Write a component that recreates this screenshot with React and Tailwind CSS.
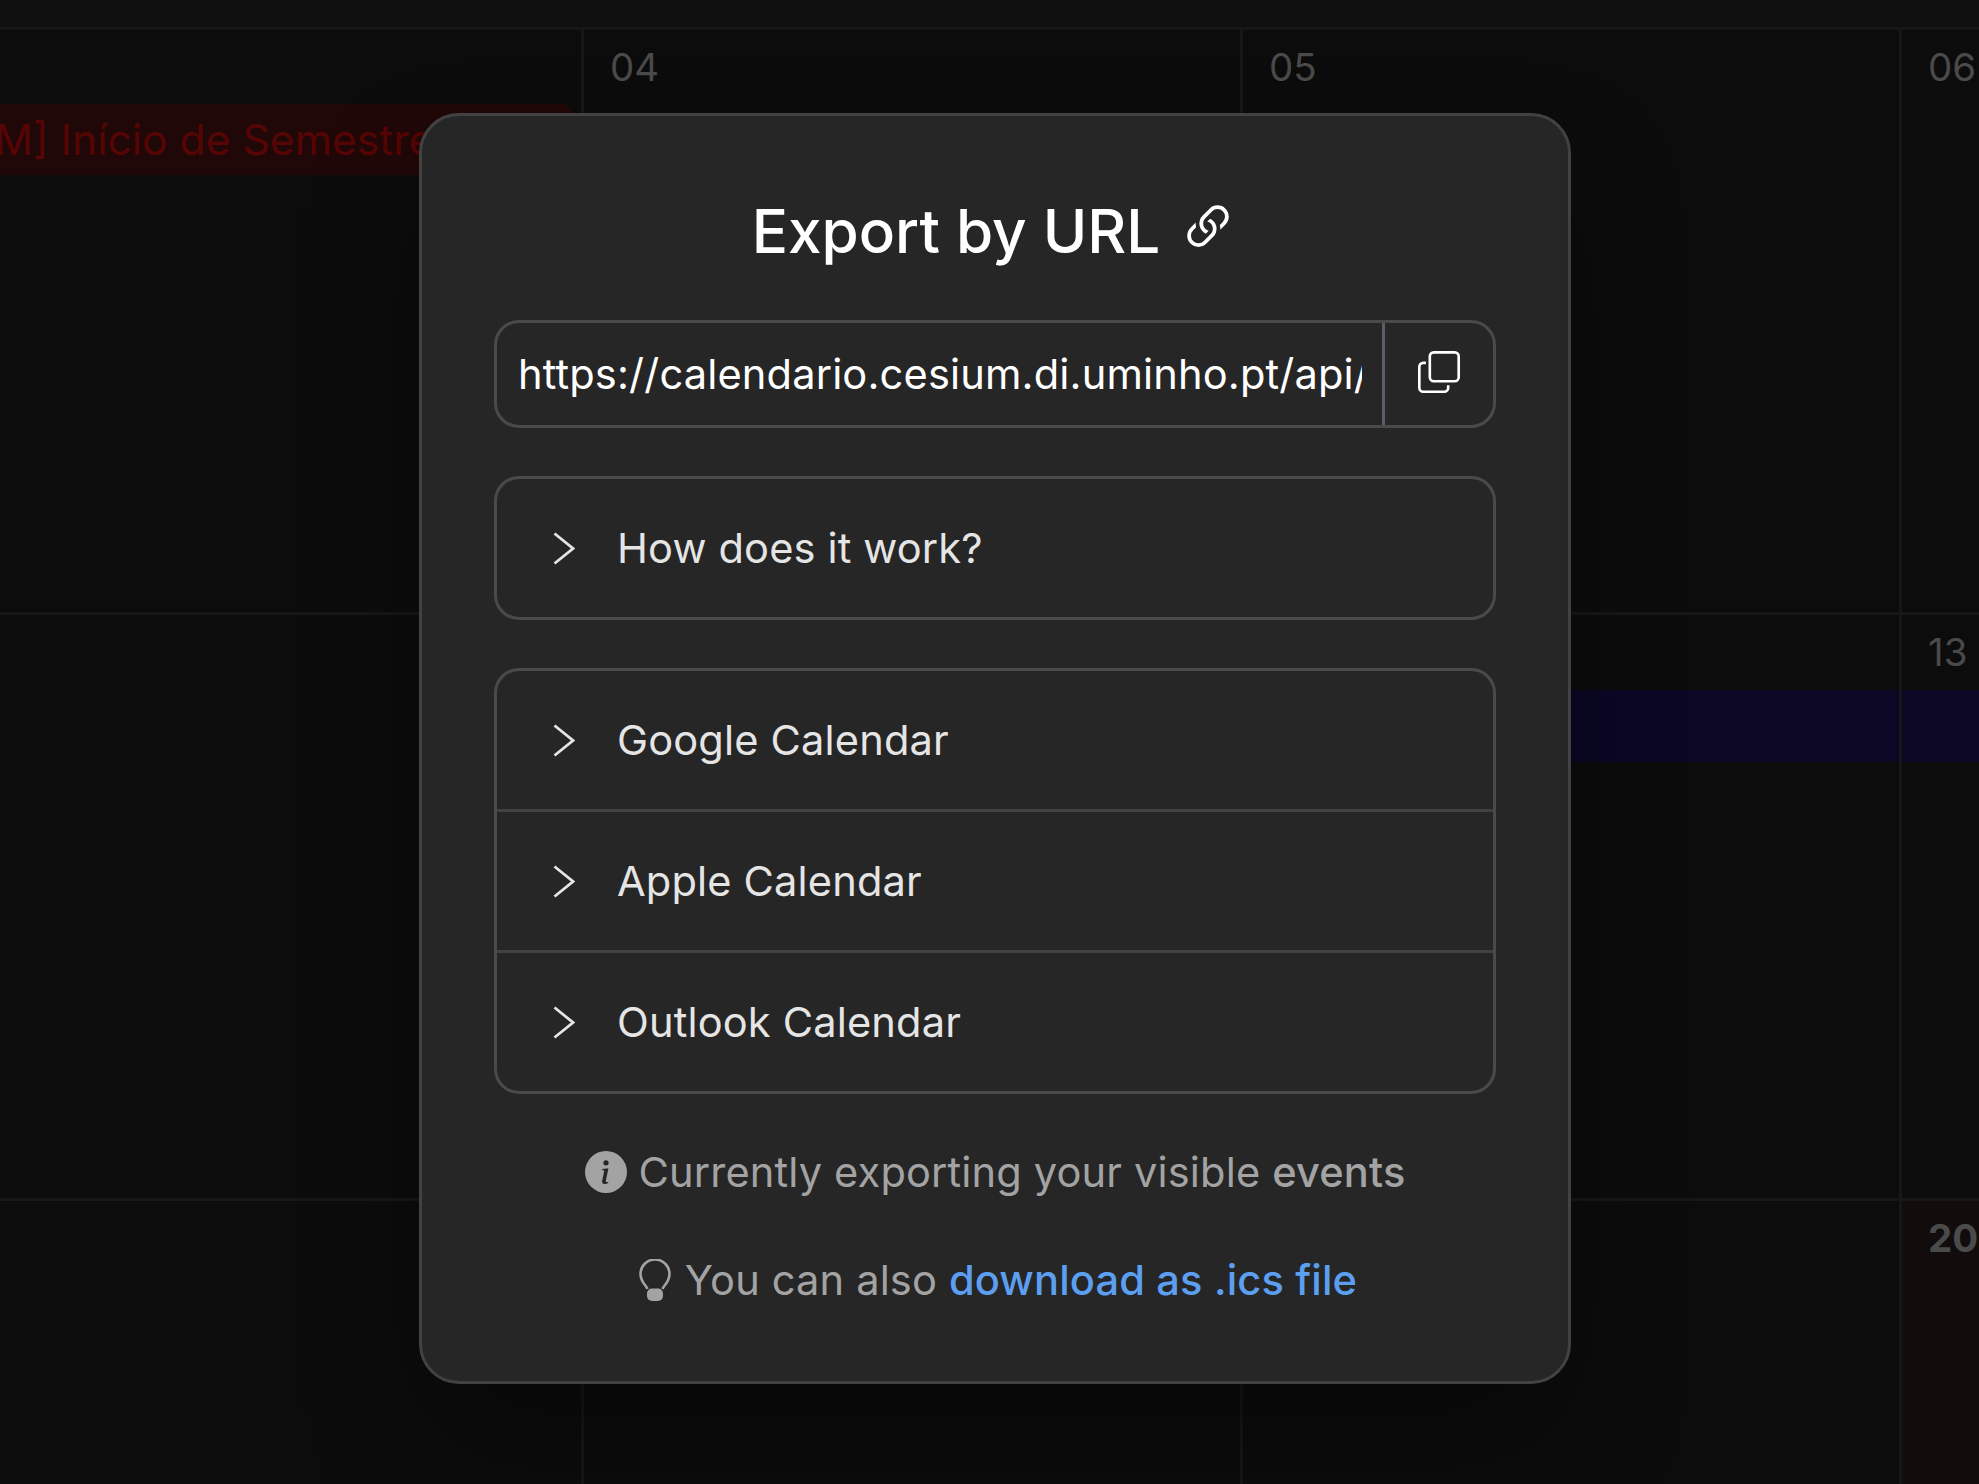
import React from "react";
import { BsLink45Deg, BsCopy, BsInfoCircleFill } from "react-icons/bs";

const weeks = [
  ["03", "04", "05", "06"],
  ["10", "11", "12", "13"],
  ["17", "18", "19", "20"],
];

const calendars = ["Google Calendar", "Apple Calendar", "Outlook Calendar"];

function DayCell({ week, index, day }) {
  const weekend = week === 2 && index === 3;
  return (
    <div className={`border-t-[3px] border-l-[3px] border-[#171717] ${weekend ? "bg-[#120c0c]" : ""}`}>
      <p className={`pl-[26px] pt-[15px] text-[38.5px] leading-[45px] text-[#4a4a4a] ${weekend ? "font-bold" : ""}`}>{day}</p>
      {week === 0 && index === 0 && (
        <div className="mt-[14px] mr-[8px] h-[71px] rounded-r-xl bg-[#210808] pl-[54px] text-[42.6px] leading-[71px] whitespace-nowrap text-[#560404]">
          [M] Início de Semestre
        </div>
      )}
      {week === 1 && index >= 2 && <div className="mt-[15px] h-[72px] bg-[#0b0725]" />}
    </div>
  );
}

function Chevron() {
  return (
    <svg viewBox="0 0 22 33" className="h-[33px] w-[22px] text-[#e5e5e5]" fill="none" stroke="currentColor" strokeWidth="2.8">
      <path d="M1.5 1.5 20 16.5 1.5 31.5" />
    </svg>
  );
}

function Bulb() {
  return (
    <svg viewBox="0 0 32 42" className="mr-[14px] h-[42px] w-[32px]" fill="none" stroke="currentColor" strokeWidth="2.6">
      <path d="M8.5 30C7 26 1.5 23 1.5 15a14.5 14.5 0 0 1 29 0c0 8-5.500 11-7 15" />
      <rect x="8" y="29.500" width="16" height="12.500" rx="5" fill="currentColor" stroke="none" />
    </svg>
  );
}

function AccordionRow({ label, divider }) {
  return (
    <div className={`flex items-center pl-[56px] ${divider ? "h-[141px] border-t-[3px] border-[#424242]" : "h-[138px]"}`}>
      <Chevron />
      <span className="ml-[42px] text-[41.6px] tracking-[0.15px] text-[#e5e5e5]">{label}</span>
    </div>
  );
}

export default function App() {
  return (
    <div className="relative h-[1484px] w-[1979px] overflow-hidden bg-[#0c0c0c] font-['Inter',sans-serif]">
      <div className="h-[27px] bg-[#111010]" />
      <div className="ml-[-78px] grid h-[1457px] grid-cols-[repeat(4,659px)] grid-rows-[585px_586px_286px]">
        {weeks.map((days, week) =>
          days.map((day, index) => <DayCell key={day} week={week} index={index} day={day} />)
        )}
      </div>

      <div className="absolute inset-0 flex items-center justify-center pl-[11px] pt-[13px]">
        <div className="flex h-[1271px] w-[1152px] flex-col rounded-[40px] border-[3px] border-[#424242] bg-[#262626] px-[72px] pt-[78px] shadow-[0_62px_125px_-30px_rgba(0,0,0,0.5)]">
          <div className="flex items-center justify-center">
            <h1 className="text-[60.2px] leading-[75px] font-medium text-white">Export by URL</h1>
            <BsLink45Deg className="mb-[8px] ml-[18px] h-[60px] w-[60px] text-white" />
          </div>

          <div className="mt-[51px] flex h-[108px] rounded-[25px] border-[3px] border-[#4a4a4a]">
            <div className="min-w-0 flex-1 overflow-hidden pr-[20px] pl-[21px]">
              <p className="overflow-hidden text-[41.6px] leading-[102px] tracking-[0.15px] whitespace-nowrap text-white">
                https://calendario.cesium.di.uminho.pt/api/export?filter=events
              </p>
            </div>
            <div className="flex w-[111px] items-center justify-center border-l-[3px] border-[#5b5e66]">
              <BsCopy className="mb-[4px] h-[42px] w-[42px] text-white" />
            </div>
          </div>

          <div className="mt-[48px] rounded-[25px] border-[3px] border-[#4a4a4a]">
            <AccordionRow label="How does it work?" />
          </div>

          <div className="mt-[48px] rounded-[25px] border-[3px] border-[#4a4a4a]">
            {calendars.map((label, index) => (
              <AccordionRow key={label} label={label} divider={index > 0} />
            ))}
          </div>

          <p className="mt-[53px] flex items-center justify-center text-[41.6px] leading-[50px] tracking-[0.15px] text-[#a3a3a3]">
            <BsInfoCircleFill className="mr-[12px] h-[42px] w-[42px]" />
            <span>
              Currently exporting your visible <span className="font-medium">events</span>
            </span>
          </p>

          <p className="mt-[58px] flex items-center justify-center pl-[6px] text-[41.6px] leading-[50px] tracking-[0.15px] text-[#a3a3a3]">
            <Bulb />
            <span>
              You can also <span className="font-medium text-[#5c9ff0]">download as .ics file</span>
            </span>
          </p>
        </div>
      </div>
    </div>
  );
}
